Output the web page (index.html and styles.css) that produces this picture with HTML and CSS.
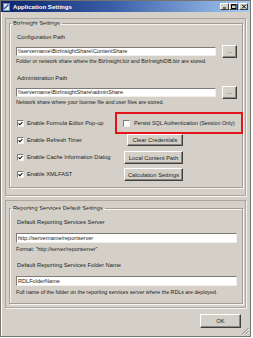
FILE: index.html
```html
<!DOCTYPE html>
<html>
<head>
<meta charset="utf-8">
<link rel="stylesheet" href="styles.css">
</head>
<body>
<div class="window">
  <div class="titlebar">
    <svg class="appicon" width="7" height="8" viewBox="0 0 7 8"><rect x="0.5" y="0.5" width="6" height="7" fill="#dfe8f6" stroke="#6b86b8"/><path d="M1 6 L5.5 1.5" stroke="#2b4f9c" stroke-width="1.2"/></svg>
    <span class="title">Application Settings</span>
    <div class="ctrls">
      <span class="ctrl"><svg width="6" height="5" viewBox="0 0 6 5"><rect x="1" y="3.5" width="3" height="1" fill="#000"/></svg></span>
      <span class="ctrl"><svg width="6" height="5" viewBox="0 0 6 5"><rect x="0.5" y="0.5" width="4.5" height="4" fill="none" stroke="#000"/><rect x="0.5" y="0.5" width="4.5" height="1" fill="#000"/></svg></span>
      <span class="ctrl close"><svg width="6" height="5" viewBox="0 0 6 5"><path d="M1 0.5 L5 4.5 M5 0.5 L1 4.5" stroke="#000" stroke-width="1"/></svg></span>
    </div>
  </div>
  <div class="client">
    <div class="panel p1">
      <fieldset class="group">
        <legend>BizInsight Settings</legend>
        <div class="label">Configuration Path</div>
        <div class="pathrow">
          <div class="input">\\servername\BizInsightShare\ContentShare</div>
          <div class="btn dots">...</div>
        </div>
        <div class="help">Folder or network share where the BizInsight.biz and BizInsightDB.biz are stored.</div>
        <div class="label second">Administration Path</div>
        <div class="pathrow">
          <div class="input">\\servername\BizInsightShare\adminShare</div>
          <div class="btn dots">...</div>
        </div>
        <div class="help">Network share where your license file and user files are stored.</div>
        <div class="opts">
          <div class="orow first">
            <div class="chk"><span class="box"><svg width="5" height="5" viewBox="0 0 5 5"><path d="M0.6 2.4 L1.9 3.8 L4.4 1" fill="none" stroke="#000" stroke-width="1.1"/></svg></span>Enable Formula Editor Pop-up</div>
            <div class="highlight"><div class="chk"><span class="box"></span>Persist SQL Authentication (Session Only)</div></div>
          </div>
          <div class="orow">
            <div class="chk"><span class="box"><svg width="5" height="5" viewBox="0 0 5 5"><path d="M0.6 2.4 L1.9 3.8 L4.4 1" fill="none" stroke="#000" stroke-width="1.1"/></svg></span>Enable Refresh Timer</div>
            <div class="btn side clear">Clear Credentials</div>
          </div>
          <div class="orow gap">
            <div class="chk"><span class="box"><svg width="5" height="5" viewBox="0 0 5 5"><path d="M0.6 2.4 L1.9 3.8 L4.4 1" fill="none" stroke="#000" stroke-width="1.1"/></svg></span>Enable Cache Information Dialog</div>
            <div class="btn side">Local Content Path</div>
          </div>
          <div class="orow gap">
            <div class="chk"><span class="box"><svg width="5" height="5" viewBox="0 0 5 5"><path d="M0.6 2.4 L1.9 3.8 L4.4 1" fill="none" stroke="#000" stroke-width="1.1"/></svg></span>Enable XMLFAST</div>
            <div class="btn side">Calculation Settings</div>
          </div>
        </div>
      </fieldset>
    </div>
    <div class="panel p2">
      <fieldset class="group">
        <legend>Reporting Services Default Settings</legend>
        <div class="label">Default Reporting Services Server</div>
        <div class="input full">http://servername/reportserver</div>
        <div class="help hgap">Format: "http://server/reportserver"</div>
        <div class="label third">Default Reporting Services Folder Name</div>
        <div class="input full">RDLFolderName</div>
        <div class="help hgap">Full name of the folder on the reporting services server where the RDLs are deployed.</div>
      </fieldset>
    </div>
    <div class="footer">
      <div class="btn ok">OK</div>
    </div>
  </div>
  <svg class="grip" width="8" height="8" viewBox="0 0 8 8"><path d="M7.5 1 L1 7.5 M7.5 4 L4 7.5 M7.5 7 L7 7.5" stroke="#808080" stroke-width="1"/><path d="M8 2 L2 8 M8 5 L5 8" stroke="#fff" stroke-width="0.8"/></svg>
</div>
</body>
</html>
```
FILE: styles.css
```css
* { box-sizing: border-box; }
html, body { margin: 0; padding: 0; background: #fff; }
body { font-family: "Liberation Sans", Arial, sans-serif; color: #1c1c1c; }

.window {
  width: 251px;
  height: 337px;
  background: #d4d0c8;
  border: 1px solid #76736d;
  box-shadow: inset 1px 1px 0 #fff;
  display: flex;
  flex-direction: column;
  position: relative;
}

.titlebar {
  height: 11px;
  flex: none;
  background: linear-gradient(90deg, #0a246a 0%, #3a5fa8 45%, #a6caf0 100%);
  display: flex;
  align-items: center;
  padding: 0 2px 0 2px;
}
.appicon { flex: none; }
.title {
  color: #fff;
  font-weight: bold;
  font-size: 6.1px;
  line-height: 11px;
  margin-left: 3px;
}
.ctrls { margin-left: auto; display: flex; }
.ctrl {
  width: 9px;
  height: 7px;
  background: #d4d0c8;
  border: 1px solid;
  border-color: #fff #404040 #404040 #fff;
  display: flex;
  align-items: center;
  justify-content: center;
}
.ctrl svg { display: block; }
.ctrl.close { margin-left: 1px; }

.client {
  flex: 1;
  display: flex;
  flex-direction: column;
  padding: 6px 4px 0 4px;
}

.panel {
  border: 1px solid #aaa69e;
  box-shadow: 1px 1px 0 #f4f3ef;
  padding: 0 2px 7px 3px;
}
.p2 { margin-top: 4px; padding-top: 3px; padding-bottom: 3px; }

.group {
  margin: 0;
  border: 1px solid #a29e96;
  box-shadow: 1px 1px 0 #f6f5f2, inset 1px 1px 0 #f6f5f2;
  padding: 6px 5px 6px 6px;
  min-width: 0;
}
.p2 .group { padding-bottom: 7px; }
.group legend {
  font-size: 5.7px;
  line-height: 8px;
  padding: 0 2px;
  margin-left: -5px;
}

.label {
  font-size: 5.8px;
  line-height: 8px;
  padding-left: 1px;
}
.label.second { margin-top: 9px; }
.label.third { margin-top: 8px; }

.pathrow {
  margin-top: 4px;
  height: 13px;
  display: flex;
  align-items: center;
}
.input {
  height: 9px;
  background: #fff;
  border: 1px solid;
  border-color: #7f7c76 #f0efeb #f0efeb #7f7c76;
  font-size: 5.6px;
  line-height: 7px;
  padding-left: 1px;
  white-space: nowrap;
  overflow: hidden;
}
.pathrow .input { width: 200px; }
.input.full { height: 10px; line-height: 8px; margin-top: 7px; }

.btn {
  background: #d4d0c8;
  border: 1px solid;
  border-color: #fff #404040 #404040 #fff;
  box-shadow: inset -1px -1px 0 #8a8781;
  font-size: 5.8px;
  display: flex;
  align-items: center;
  justify-content: center;
  white-space: nowrap;
}
.btn.dots { width: 15px; height: 13px; margin-left: 6px; line-height: 5px; }

.help {
  font-size: 5.3px;
  line-height: 7px;
  white-space: nowrap;
}
.help.hgap { margin-top: 3px; }

.opts { margin-top: 6px; }
.orow {
  display: grid;
  grid-template-columns: 99px 1fr;
  align-items: center;
  height: 13px;
}
.orow.first { height: 22px; }
.orow.gap { margin-top: 4px; }

.chk {
  display: flex;
  align-items: center;
  font-size: 5.7px;
  line-height: 7px;
  padding-left: 1px;
  white-space: nowrap;
}
.box {
  width: 7px;
  height: 7px;
  flex: none;
  background: #fff;
  border: 1px solid;
  border-color: #7f7c76 #f0efeb #f0efeb #7f7c76;
  margin-right: 3px;
  display: flex;
  align-items: center;
  justify-content: center;
}
.box svg { display: block; }

.highlight {
  height: 22px;
  border: 2px solid #e3131b;
  margin-right: -6px;
  display: flex;
  align-items: center;
  padding-left: 6px;
}
.highlight .chk { padding-left: 0; font-size: 5.4px; }
.highlight .box { margin-right: 4px; }

.btn.side {
  width: 59px;
  height: 13px;
  margin-left: 9px;
}
.btn.side.clear { width: 56px; margin-left: 12px; height: 12px; align-self: start; }

.footer {
  margin-top: 6px;
  display: flex;
  justify-content: flex-end;
  padding-right: 5px;
}
.btn.ok { width: 41px; height: 14px; font-size: 5.8px; }

.grip { position: absolute; right: 1px; bottom: 1px; }
```
